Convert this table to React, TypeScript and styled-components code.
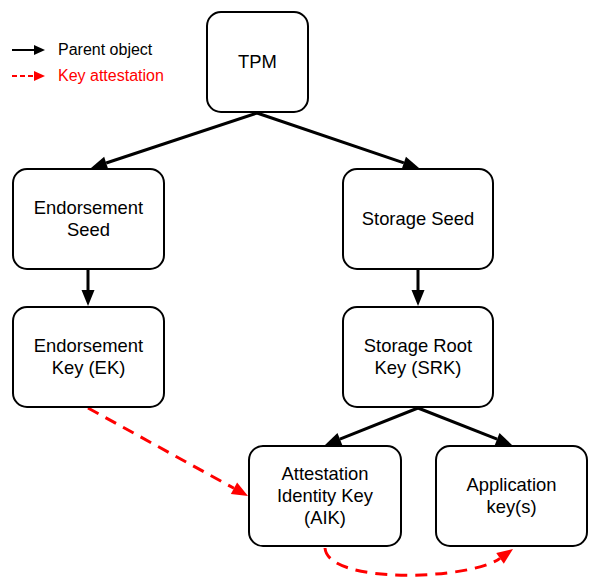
import React, { ReactElement } from 'react'
import styled, { createGlobalStyle } from 'styled-components'

const GlobalStyle = createGlobalStyle`
  html, body {
    margin: 0;
    padding: 0;
    background: #ffffff;
  }
  body {
    font-family: 'Liberation Sans', Arial, sans-serif;
    color: #000000;
  }
`

const Canvas = styled.div`
  position: relative;
  width: 604px;
  height: 584px;
  overflow: hidden;
  background: #ffffff;
`

const Edges = styled.svg`
  position: absolute;
  left: 0;
  top: 0;
  width: 604px;
  height: 584px;
`

const Legend = styled.div`
  display: flex;
  flex-direction: column;
  gap: 7px;
  padding: 40px 0 0 12px;
`

const LegendRow = styled.div<{ $color: string }>`
  display: flex;
  align-items: center;
  gap: 13px;
  height: 19px;
  font-size: 16px;
  color: ${(p) => p.$color};
`

const Node = styled.div<{ $x: number; $y: number; $w: number; $h: number }>`
  position: absolute;
  left: ${(p) => p.$x}px;
  top: ${(p) => p.$y}px;
  width: ${(p) => p.$w}px;
  height: ${(p) => p.$h}px;
  box-sizing: border-box;
  border: 2px solid #000000;
  border-radius: 15px;
  background: #ffffff;
  display: flex;
  align-items: center;
  justify-content: center;
  text-align: center;
  font-size: 18.4px;
  line-height: 22px;
`

const RED = '#ff0000'
const DASH = '12 8'

type Pt = [number, number]

const head = (tip: Pt, from: Pt, len = 16, half = 6.5) => {
  const dx = tip[0] - from[0]
  const dy = tip[1] - from[1]
  const d = Math.hypot(dx, dy)
  const ux = dx / d
  const uy = dy / d
  const bx = tip[0] - ux * len
  const by = tip[1] - uy * len
  const base: Pt = [bx, by]
  const pts = `${tip[0]},${tip[1]} ${bx - uy * half},${by + ux * half} ${bx + uy * half},${by - ux * half}`
  return { base, pts }
}

const Arrow = ({ from, to, color = '#000', dashed = false }: { from: Pt; to: Pt; color?: string; dashed?: boolean }) => {
  const { base, pts } = head(to, from)
  return (
    <g>
      <line
        x1={from[0]}
        y1={from[1]}
        x2={base[0]}
        y2={base[1]}
        stroke={color}
        strokeWidth={3}
        strokeDasharray={dashed ? DASH : undefined}
      />
      <polygon points={pts} fill={color} />
    </g>
  )
}

const CurvedArrow = ({ from, c1, c2, to, color }: { from: Pt; c1: Pt; c2: Pt; to: Pt; color: string }) => {
  const { base, pts } = head(to, c2)
  return (
    <g>
      <path
        d={`M${from[0]},${from[1]} C${c1[0]},${c1[1]} ${c2[0]},${c2[1]} ${base[0]},${base[1]}`}
        fill="none"
        stroke={color}
        strokeWidth={3}
        strokeDasharray={DASH}
      />
      <polygon points={pts} fill={color} />
    </g>
  )
}

const LegendArrow = ({ color, dashed }: { color: string; dashed?: boolean }) => (
  <svg width={33} height={14} viewBox="0 0 33 14">
    <line x1={0} y1={7} x2={23} y2={7} stroke={color} strokeWidth={2} strokeDasharray={dashed ? '5 3' : undefined} />
    <polygon points="33,7 22,2 22,12" fill={color} />
  </svg>
)

const nodes = [
  { id: 'tpm', x: 206, y: 11, w: 103, h: 102, lines: ['TPM'] },
  { id: 'es', x: 12, y: 168, w: 153, h: 102, lines: ['Endorsement', 'Seed'] },
  { id: 'ss', x: 342, y: 168, w: 152, h: 102, lines: ['Storage Seed'] },
  { id: 'ek', x: 12, y: 306, w: 153, h: 102, lines: ['Endorsement', 'Key (EK)'] },
  { id: 'srk', x: 342, y: 306, w: 152, h: 102, lines: ['Storage Root', 'Key (SRK)'] },
  { id: 'aik', x: 248, y: 445, w: 154, h: 102, lines: ['Attestation', 'Identity Key', '(AIK)'] },
  { id: 'app', x: 435, y: 445, w: 153, h: 102, lines: ['Application', 'key(s)'] },
]

export default function App(): ReactElement {
  return (
    <>
      <GlobalStyle />
      <Canvas>
        <Edges viewBox="0 0 604 584">
          <Arrow from={[257, 113]} to={[91, 168]} />
          <Arrow from={[257, 113]} to={[419, 168]} />
          <Arrow from={[88, 270]} to={[88, 306]} />
          <Arrow from={[418, 270]} to={[418, 306]} />
          <Arrow from={[418, 408]} to={[325, 445]} />
          <Arrow from={[418, 408]} to={[512, 445]} />
          <Arrow from={[88, 408]} to={[248, 496]} color={RED} dashed />
          <CurvedArrow from={[325, 548]} c1={[328, 585]} c2={[470, 580]} to={[513, 549]} color={RED} />
        </Edges>
        <Legend>
          <LegendRow $color="#000000">
            <LegendArrow color="#000000" />
            Parent object
          </LegendRow>
          <LegendRow $color={RED}>
            <LegendArrow color={RED} dashed />
            Key attestation
          </LegendRow>
        </Legend>
        {nodes.map((n) => (
          <Node key={n.id} $x={n.x} $y={n.y} $w={n.w} $h={n.h}>
            <div>
              {n.lines.map((l) => (
                <div key={l}>{l}</div>
              ))}
            </div>
          </Node>
        ))}
      </Canvas>
    </>
  )
}
